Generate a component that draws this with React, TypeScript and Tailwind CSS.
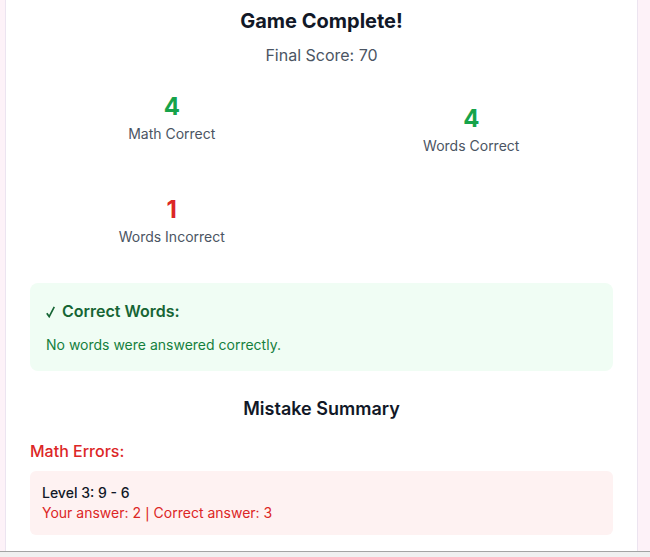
import React from 'react';

type Stat = { value: number; label: string; tone: 'good' | 'bad'; offset?: boolean };

const stats: Stat[] = [
  { value: 4, label: 'Math Correct', tone: 'good' },
  { value: 4, label: 'Words Correct', tone: 'good', offset: true },
  { value: 1, label: 'Words Incorrect', tone: 'bad' },
];

const StatCell: React.FC<{ stat: Stat }> = ({ stat }) => (
  <div className={`flex flex-col items-center ${stat.offset ? 'pt-3' : ''}`}>
    <div
      className={`text-2xl font-bold leading-8 ${
        stat.tone === 'good' ? 'text-[#16a34a]' : 'text-[#dc2626]'
      }`}
    >
      {stat.value}
    </div>
    <div className="mt-px text-sm leading-5 text-[#4b5563]">{stat.label}</div>
  </div>
);

export default function App() {
  return (
    <div
      className="flex h-[557px] w-[650px] flex-col overflow-hidden bg-[#fdf2f8]"
      style={{ fontFamily: 'Inter, "Noto Sans", sans-serif' }}
    >
      <div className="flex-1 overflow-hidden pl-[5px] pr-[12px]">
        <div className="h-full border-x border-[#ece4f0] bg-white px-6 pt-[7px]">
          <h1 className="text-center text-xl font-bold leading-7 text-[#111827]">Game Complete!</h1>
          <p className="mt-2 text-center text-base leading-6 text-[#4b5563]">Final Score: 70</p>

          <div className="mt-6 grid grid-cols-2 gap-x-4 gap-y-[38px]">
            {stats.map((s) => (
              <StatCell key={s.label} stat={s} />
            ))}
          </div>

          <div className="mt-9 rounded-lg bg-[#f0fdf4] px-4 py-4">
            <h3 className="flex items-center gap-[7px] text-base font-semibold leading-6 text-[#166534]">
              <svg width="9" height="12" viewBox="0 0 9 12" className="mt-[2px]" aria-hidden>
                <path d="M0.8 7.2 L3.2 10.6 L8.3 0.8" fill="none" stroke="currentColor" strokeWidth="1.7" />
              </svg>
              Correct Words:
            </h3>
            <p className="mt-3 text-sm leading-5 text-[#15803d]">No words were answered correctly.</p>
          </div>

          <h2 className="mt-6 text-center text-lg font-semibold leading-7 text-[#111827]">Mistake Summary</h2>

          <h3 className="mt-4 text-base font-medium leading-6 text-[#dc2626]">Math Errors:</h3>
          <div className="mt-2 rounded-md bg-[#fef2f2] p-3">
            <div className="text-sm font-medium leading-5 text-[#111827]">Level 3: 9 - 6</div>
            <div className="text-sm leading-5 text-[#dc2626]">
              Your answer: 2 <span style={{ fontFamily: '"DejaVu Sans", sans-serif' }}>|</span> Correct answer: 3
            </div>
          </div>
        </div>
      </div>
      <div className="h-[6px] border-t border-[#a3a3a3] bg-[#f0f0f0]" />
    </div>
  );
}
